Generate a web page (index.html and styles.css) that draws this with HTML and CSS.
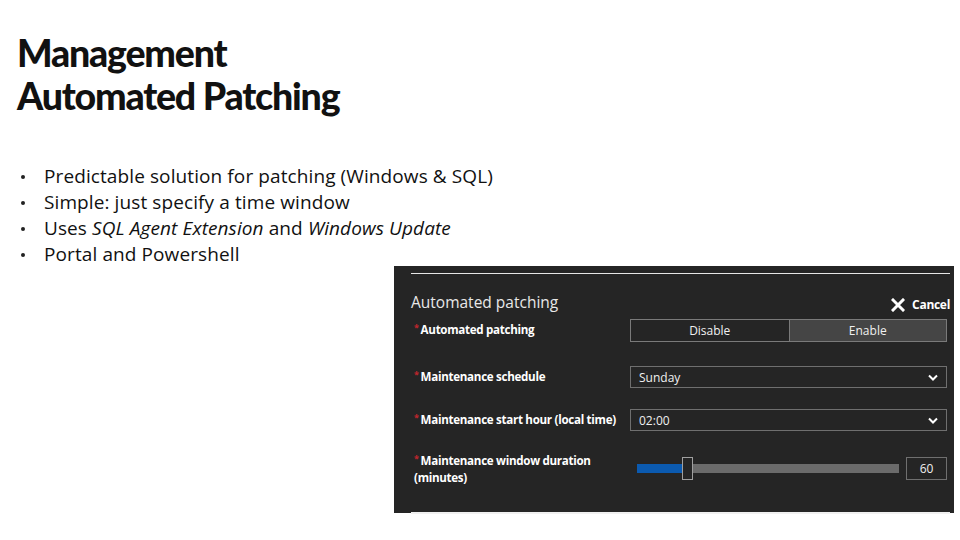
FILE: index.html
```html
<!DOCTYPE html>
<html>
<head>
<meta charset="utf-8">
<link rel="stylesheet" href="styles.css">
</head>
<body>
<div class="slide">
  <h1 class="title"><span class="tline">Management</span><span class="tline">Automated Patching</span></h1>
  <ul class="bullets">
    <li>Predictable solution for patching (Windows &amp; SQL)</li>
    <li>Simple: just specify a time window</li>
    <li>Uses <em>SQL Agent Extension</em> and <em>Windows Update</em></li>
    <li>Portal and Powershell</li>
  </ul>
  <div class="panel">
    <div class="rule"></div>
    <div class="head">
      <div class="head-title">Automated patching</div>
      <div class="cancel">
        <svg class="x-icon" width="14" height="14" viewBox="0 0 14 14"><path d="M2 2 L12 12 M12 2 L2 12" stroke="#fff" stroke-width="3" stroke-linecap="square"/></svg>
        <span>Cancel</span>
      </div>
    </div>
    <div class="row row1">
      <div class="label"><span class="req">*</span>Automated patching</div>
      <div class="toggle">
        <div class="opt">Disable</div>
        <div class="opt on">Enable</div>
      </div>
    </div>
    <div class="row row2">
      <div class="label"><span class="req">*</span>Maintenance schedule</div>
      <div class="select"><span>Sunday</span>
        <svg width="10" height="7" viewBox="0 0 10 7"><path d="M1 1.5 L5 5.5 L9 1.5" fill="none" stroke="#fff" stroke-width="2"/></svg>
      </div>
    </div>
    <div class="row row3">
      <div class="label"><span class="req">*</span>Maintenance start hour (local time)</div>
      <div class="select"><span>02:00</span>
        <svg width="10" height="7" viewBox="0 0 10 7"><path d="M1 1.5 L5 5.5 L9 1.5" fill="none" stroke="#fff" stroke-width="2"/></svg>
      </div>
    </div>
    <div class="row row4">
      <div class="label two"><span class="req">*</span>Maintenance window duration<br>(minutes)</div>
      <div class="slider-wrap">
        <div class="slider">
          <div class="fill"></div>
          <div class="thumb"></div>
        </div>
        <div class="num">60</div>
      </div>
    </div>
    <div class="rule bottom"></div>
  </div>
</div>
</body>
</html>
```

FILE: styles.css
```css
html, body {
  margin: 0;
  padding: 0;
  background: #fff;
}
.slide {
  width: 960px;
  height: 540px;
  overflow: hidden;
  font-family: "Open Sans", "Noto Sans", sans-serif;
  color: #1a1a1a;
}
.title {
  margin: 0;
  padding: 31px 0 0 17px;
  font-family: "Lato", "Open Sans", sans-serif;
  font-weight: 900;
  font-size: 37.5px;
  letter-spacing: -1.2px;
  color: #111;
}
.tline {
  display: block;
  height: 43px;
  line-height: 43px;
  white-space: nowrap;
}
.bullets {
  margin: 46px 0 0 0;
  padding: 0 0 0 44px;
  font-size: 19px;
  line-height: 26px;
  list-style: none;
  color: #111;
}
.bullets li {
  position: relative;
  letter-spacing: 0.1px;
}
.bullets li::before {
  content: "";
  position: absolute;
  left: -23px;
  top: 12px;
  width: 4px;
  height: 4px;
  border-radius: 50%;
  background: #222;
}
.bullets em {
  font-style: italic;
}
.panel {
  margin: -1px 0 0 394px;
  width: 560px;
  height: 247px;
  box-sizing: border-box;
  background: #252525;
  padding: 7px 4px 0 17px;
  color: #fff;
  font-family: "Open Sans", sans-serif;
}
.rule {
  height: 1px;
  background: #e6e6e6;
}
.rule.bottom {
  height: 2px;
  margin-top: 27px;
  background: #f0f0f0;
}
.head {
  height: 45px;
  box-sizing: border-box;
  padding-top: 17px;
  display: flex;
  justify-content: space-between;
  align-items: flex-start;
}
.head-title {
  font-size: 15.5px;
  line-height: 22px;
  color: #e8e8e8;
  letter-spacing: 0;
}
.cancel {
  display: flex;
  align-items: center;
  gap: 7px;
  margin-top: 6px;
  font-size: 12px;
  font-weight: 700;
  letter-spacing: -0.3px;
  line-height: 16px;
}
.x-icon {
  display: block;
}
.row {
  display: grid;
  grid-template-columns: 216px 317px;
  padding-left: 3px;
  align-items: center;
}
.label {
  font-size: 11.6px;
  font-weight: 700;
  letter-spacing: -0.3px;
  line-height: 16px;
  color: #fff;
  white-space: nowrap;
}
.req {
  color: #c0262d;
  font-size: 9px;
  margin-right: 2px;
  position: relative;
  top: -3px;
}
.row1 { height: 23px; }
.row2 { height: 22px; margin-top: 24px; }
.row3 { height: 22px; margin-top: 21px; }
.row4 { height: 32px; margin-top: 22px; align-items: start; }
.toggle {
  display: grid;
  grid-template-columns: 1fr 1fr;
  height: 23px;
  box-sizing: border-box;
  border: 1px solid #7a7a7a;
  font-size: 12px;
}
.opt {
  display: flex;
  align-items: center;
  justify-content: center;
  color: #f0f0f0;
}
.opt.on {
  background: #454545;
  border-left: 1px solid #7a7a7a;
}
.select {
  height: 22px;
  box-sizing: border-box;
  border: 1px solid #6f6f6f;
  display: flex;
  align-items: center;
  justify-content: space-between;
  padding: 0 8px 0 8px;
  font-size: 12px;
  color: #f0f0f0;
}
.slider-wrap {
  display: flex;
  align-items: center;
  height: 23px;
  margin-top: 4px;
}
.slider {
  position: relative;
  margin-left: 7px;
  width: 262px;
  height: 9px;
  background: #6b6b6b;
}
.fill {
  width: 46px;
  height: 9px;
  background: #0b5ab0;
}
.thumb {
  position: absolute;
  left: 45px;
  top: -7px;
  width: 9px;
  height: 21px;
  background: #252525;
  border: 1px solid #a0a0a0;
}
.num {
  margin-left: 7px;
  width: 41px;
  height: 23px;
  box-sizing: border-box;
  border: 1px solid #6f6f6f;
  display: flex;
  align-items: center;
  justify-content: center;
  font-size: 12px;
  color: #f0f0f0;
}
```
